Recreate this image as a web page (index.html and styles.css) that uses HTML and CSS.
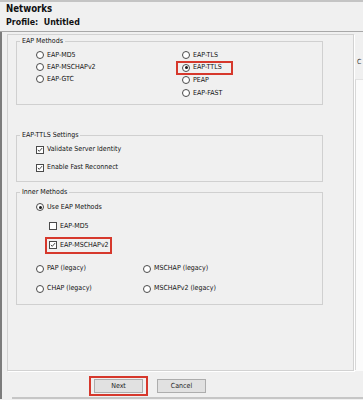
FILE: index.html
```html
<!DOCTYPE html>
<html>
  <head>
    <title>Networks</title>
    <link rel="stylesheet" href="styles.css">
  </head>
  <body>
    <div class="topbar"></div>
    <header class="head">
      <div class="title">Networks</div>
      <div class="profile">Profile:&nbsp; Untitled</div>
    </header>

    <div class="frame">
      <div class="main">
        <div class="panel">
          <fieldset class="grp grp-eap">
            <legend>EAP Methods</legend>
            <div class="cols">
              <div class="col col-left">
                <div class="row"><label class="opt"><span class="rd"></span>EAP-MD5</label></div>
                <div class="row"><label class="opt"><span class="rd"></span>EAP-MSCHAPv2</label></div>
                <div class="row"><label class="opt"><span class="rd"></span>EAP-GTC</label></div>
              </div>
              <div class="col col-right">
                <div class="row"><label class="opt"><span class="rd"></span>EAP-TLS</label></div>
                <div class="row"><label class="opt hl hl-ttls"><span class="rd on"></span>EAP-TTLS</label></div>
                <div class="row"><label class="opt"><span class="rd"></span>PEAP</label></div>
                <div class="row"><label class="opt"><span class="rd"></span>EAP-FAST</label></div>
              </div>
            </div>
          </fieldset>

          <fieldset class="grp grp-ttls">
            <legend>EAP-TTLS Settings</legend>
            <div class="stack">
              <div class="row row-tall"><label class="opt"><span class="ck on"><svg viewBox="0 0 8 8"><polyline points="1.2,3.8 3,5.8 6.8,1.4"/></svg></span>Validate Server Identity</label></div>
              <div class="row row-tall"><label class="opt"><span class="ck on"><svg viewBox="0 0 8 8"><polyline points="1.2,3.8 3,5.8 6.8,1.4"/></svg></span>Enable Fast Reconnect</label></div>
            </div>
          </fieldset>

          <fieldset class="grp grp-inner">
            <legend>Inner Methods</legend>
            <div class="stack">
              <div class="row row-mid"><label class="opt"><span class="rd on"></span>Use EAP Methods</label></div>
              <div class="row row-mid sub"><label class="opt"><span class="ck"></span>EAP-MD5</label></div>
              <div class="row row-mid sub"><label class="opt hl hl-inner"><span class="ck on"><svg viewBox="0 0 8 8"><polyline points="1.2,3.8 3,5.8 6.8,1.4"/></svg></span>EAP-MSCHAPv2</label></div>
              <div class="legacy">
                <div class="row row-leg"><label class="opt"><span class="rd"></span>PAP (legacy)</label></div>
                <div class="row row-leg"><label class="opt"><span class="rd"></span>MSCHAP (legacy)</label></div>
                <div class="row row-leg"><label class="opt"><span class="rd"></span>CHAP (legacy)</label></div>
                <div class="row row-leg"><label class="opt"><span class="rd"></span>MSCHAPv2 (legacy)</label></div>
              </div>
            </div>
          </fieldset>
        </div>

        <div class="side">
          <div class="side-label">C</div>
          <div class="side-list">
            <div class="side-rows"></div>
          </div>
        </div>
      </div>

      <footer class="foot">
        <div class="buttons">
          <span class="btn-hl"><button type="button" class="btn">Next</button></span>
          <button type="button" class="btn btn-cancel">Cancel</button>
        </div>
        <div class="foot-line"></div>
      </footer>
    </div>
  </body>
</html>
```

FILE: styles.css
```css
body {
  margin: 0;
  width: 363px;
  height: 400px;
  overflow: hidden;
  background-color: #f0f0f0;
  color: #111;
  font-family: "DejaVu Sans Condensed", "DejaVu Sans", sans-serif;
  font-stretch: condensed;
  font-size: 7px;
}

.topbar {
  height: 2px;
  background-color: #c4c4c4;
}

.head {
  height: 30px;
  padding: 1px 0 0 6px;
  box-sizing: border-box;
  border-bottom: 1px solid #a8a8a8;
  font-weight: bold;
  color: #111;
}

.title {
  font-size: 9.6px;
  line-height: 12px;
}

.profile {
  margin-top: 2px;
  font-size: 8.8px;
  line-height: 11px;
}

.frame {
  height: 367px;
  border-left: 2px solid #7c7c7c;
  display: flex;
  flex-direction: column;
}

.main {
  display: flex;
  height: 339px;
}

.panel {
  width: 347px;
  height: 337px;
  margin: 2px 0 0 5px;
  padding-top: 3px;
  box-sizing: border-box;
  border: 1px solid #d2d2d2;
  box-shadow: 1px 1px 0 #fff;
}

.grp {
  width: 307px;
  margin: 0 0 0 8px;
  padding: 0;
  box-sizing: border-box;
  border: 1px solid #d0d0d0;
  min-width: 0;
}

.grp legend {
  margin-left: 3px;
  padding: 0 2px;
  line-height: 7px;
}

.grp-ttls {
  margin-top: 27px;
}

.grp-inner {
  margin-top: 7px;
}

.cols {
  display: flex;
  padding: 4px 0 4.6px 19px;
}

.col-left {
  width: 146px;
}

.col-left .row {
  height: 12px;
}

.col-right .row {
  height: 12.6px;
}

.stack {
  padding: 2px 0 4px 19px;
}

.grp-inner .stack {
  padding-bottom: 5px;
}

.row {
  display: flex;
  align-items: center;
}

.row-tall {
  height: 18px;
}

.row-mid {
  height: 19px;
}

.sub {
  padding-left: 13px;
}

.legacy {
  margin-top: 4px;
  display: grid;
  grid-template-columns: 107px 1fr;
}

.row-leg {
  height: 20px;
}

.opt {
  display: inline-flex;
  align-items: center;
  gap: 3px;
  line-height: 9px;
  white-space: nowrap;
}

.rd {
  width: 8px;
  height: 8px;
  box-sizing: border-box;
  border: 1px solid #4a4a4a;
  border-radius: 50%;
  background-color: #fff;
  display: flex;
  align-items: center;
  justify-content: center;
}

.rd.on::after {
  content: "";
  width: 3px;
  height: 3px;
  border-radius: 50%;
  background-color: #1a1a1a;
}

.ck {
  width: 8px;
  height: 8px;
  box-sizing: border-box;
  border: 1px solid #4a4a4a;
  background-color: #fff;
  display: flex;
}

.ck svg {
  width: 6px;
  height: 6px;
  fill: none;
  stroke: #222;
  stroke-width: 1.1;
}

.hl {
  outline: 2px solid #d6382c;
}

.hl-ttls {
  padding: 0 9px 0 4px;
  margin: 0 -9px 0 -4px;
  line-height: 9.5px;
}

.hl-inner {
  padding: 2px 1px 2px 2px;
  margin: -2px -1px -2px -2px;
}

.side {
  flex: 1;
  overflow: hidden;
  padding-top: 25px;
}

.side-label {
  padding-left: 3px;
  line-height: 10px;
  color: #333;
}

.side-list {
  margin-left: 1px;
  height: 302px;
  background-color: #fbfbfb;
}

.side-rows {
  margin-top: 12px;
  height: 290px;
  border-top: 1px solid #e2e2e2;
  border-left: 1px solid #d8d8d8;
}

.foot {
  flex: 1;
  display: flex;
  flex-direction: column;
}

.buttons {
  display: flex;
  align-items: center;
  padding: 5px 0 0 87px;
}

.btn-hl {
  display: flex;
  padding: 1px 3px;
  border: 2px solid #d6382c;
}

.btn {
  width: 49px;
  height: 14px;
  padding: 0;
  border: 1px solid #adadad;
  background-color: #e1e1e1;
  color: #1e1e1e;
  font-family: inherit;
  font-stretch: condensed;
  font-size: 7px;
}

.btn-cancel {
  margin-left: 9px;
}

.foot-line {
  margin: 1px 0 0 10px;
  height: 2px;
  background-color: #c6c6c6;
}
```
